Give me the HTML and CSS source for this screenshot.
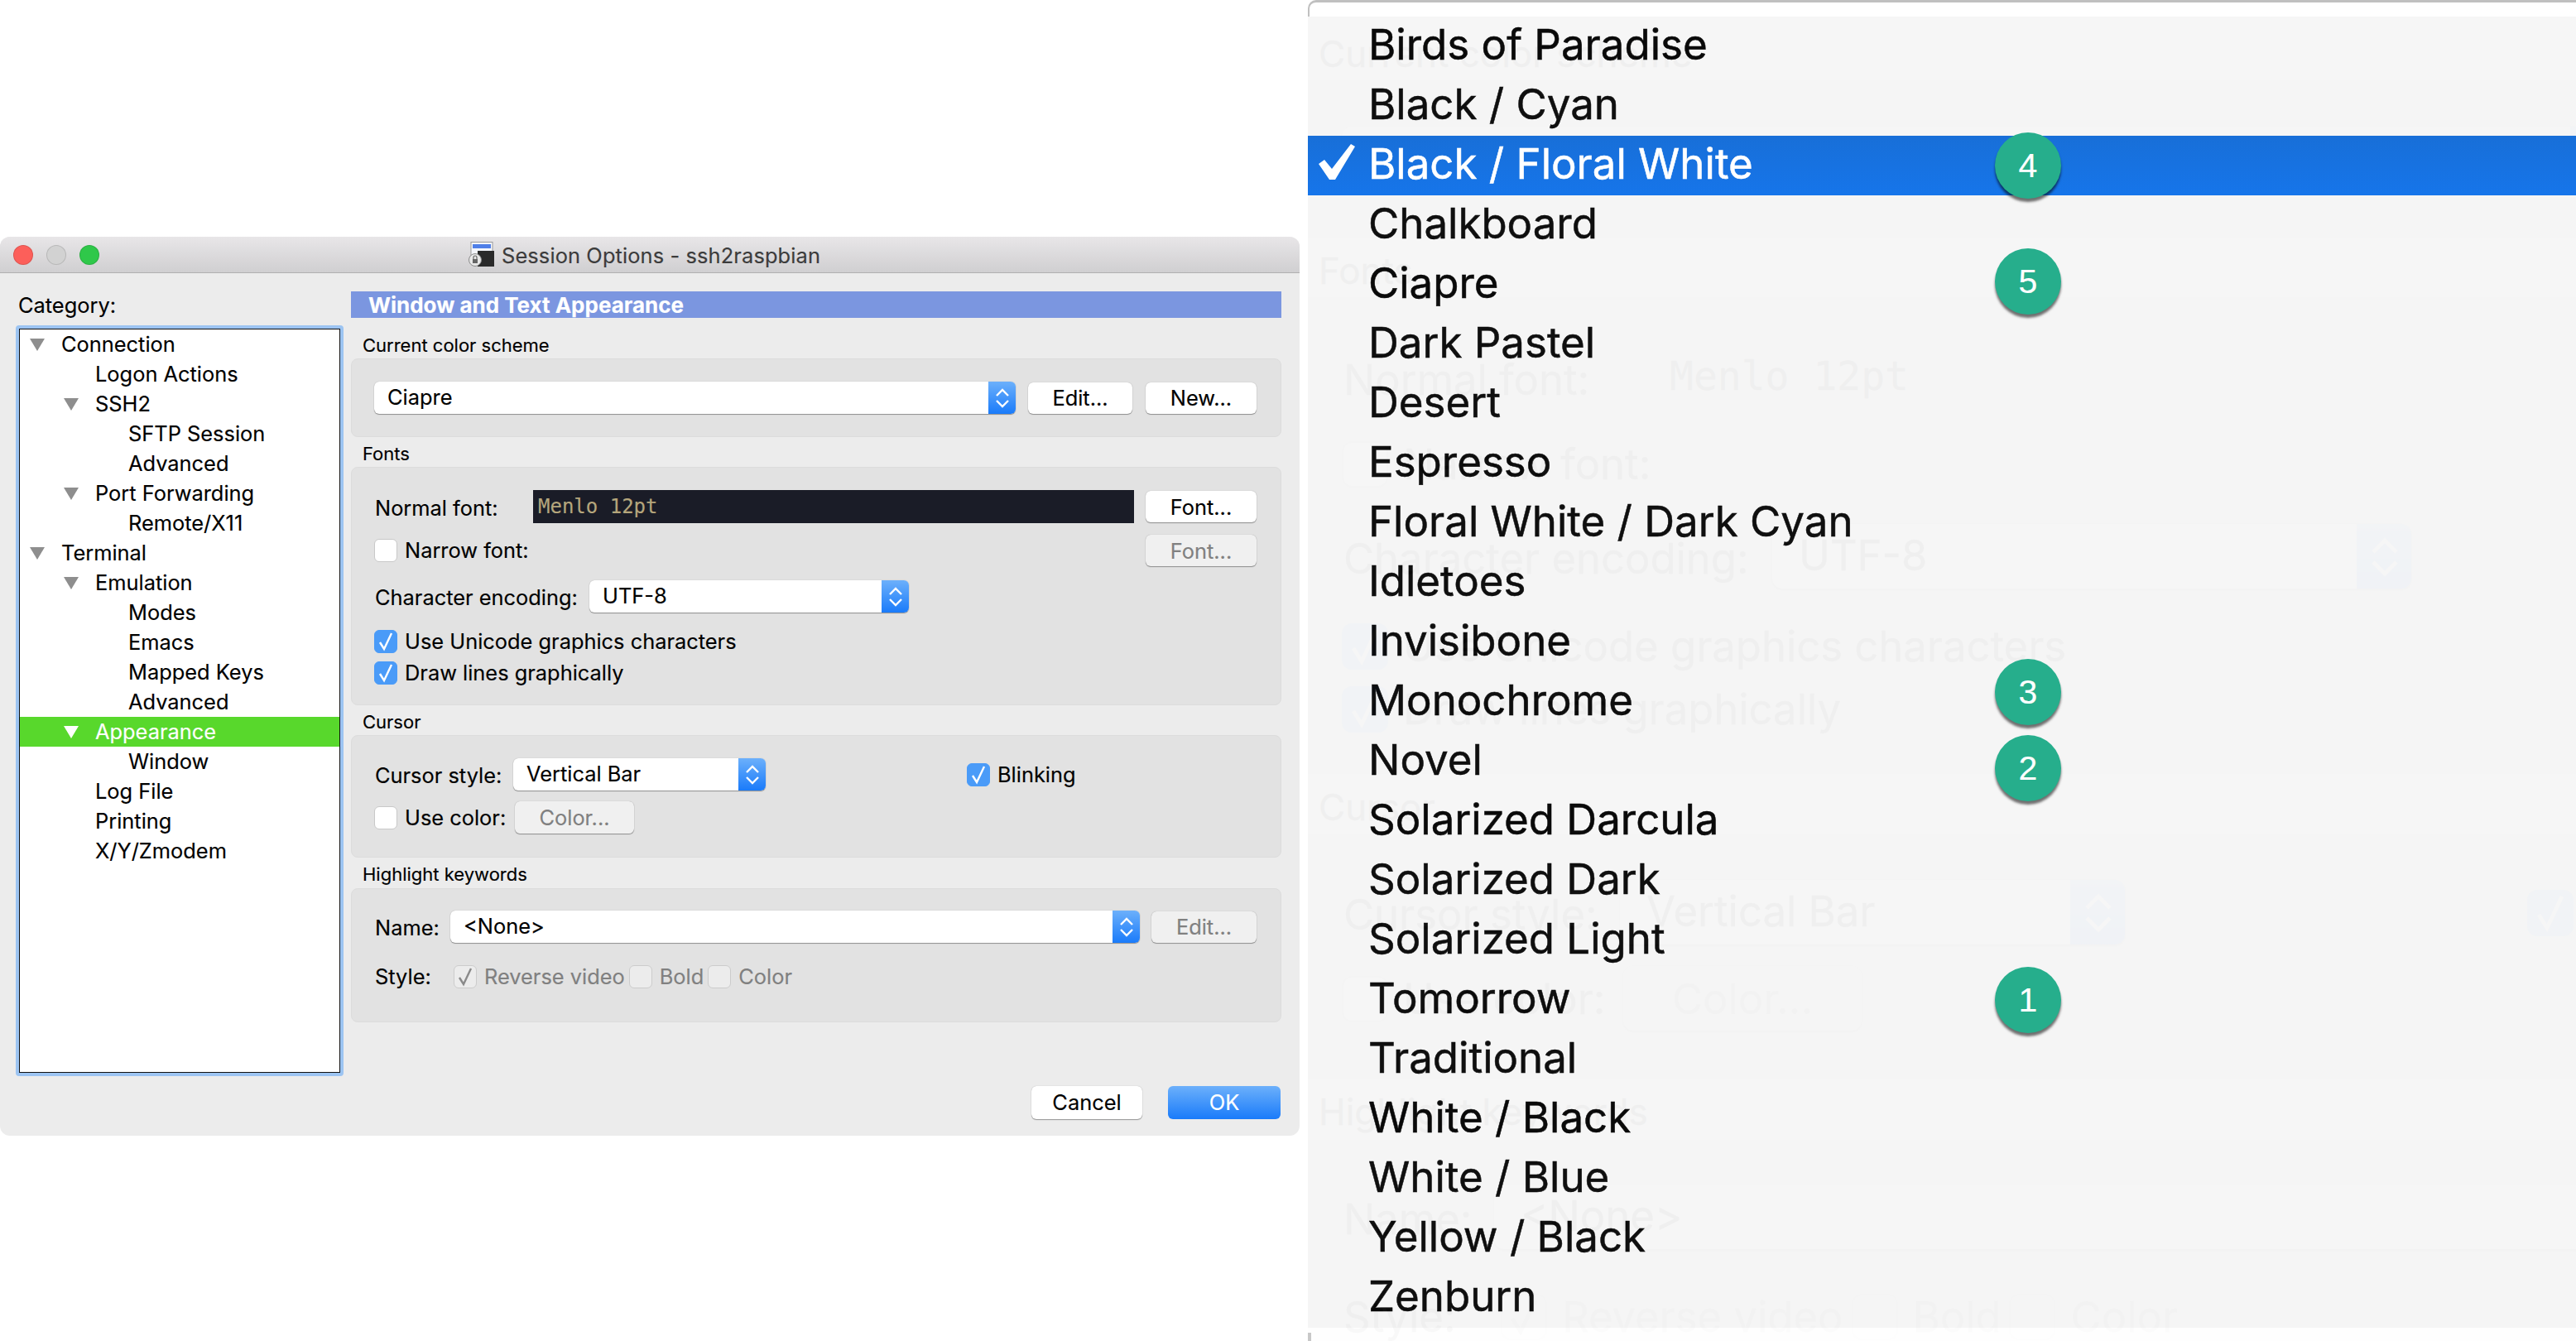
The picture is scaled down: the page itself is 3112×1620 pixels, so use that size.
FILE: index.html
```html
<!DOCTYPE html>
<html lang="en">
<head>
  <meta charset="UTF-8">
  <title>Session Options - ssh2raspbian</title>
  <link rel="stylesheet" href="styles.css">
</head>
<body>
  <div class="dialog-side">
    <div class="window">
      <div class="titlebar">
        <span class="light light-red"></span>
        <span class="light light-off"></span>
        <span class="light light-green"></span>
        <svg class="title-icon" width="31" height="31" viewBox="0 0 31 31">
          <rect x="3" y="0.5" width="26" height="21" fill="#f4f6fb" stroke="#9a9a9a"/>
          <rect x="5" y="3" width="22" height="5" fill="#4f7fe8"/>
          <rect x="11" y="11" width="20" height="19" fill="#2a2a2a"/>
          <circle cx="8" cy="22" r="7.5" fill="#e8e8e8" stroke="#8a8a8a"/>
          <rect x="5" y="21" width="6" height="5" fill="#666"/>
          <path d="M6 21v-2a2 2 0 0 1 4 0v2" fill="none" stroke="#666" stroke-width="1.2"/>
        </svg>
        <span class="title-text">Session Options - ssh2raspbian</span>
      </div>
      <div class="window-body">
        <div class="category">
          <div class="category-label">Category:</div>
          <div class="tree">
            <div class="node l0"><i class="twisty"></i>Connection</div>
            <div class="node l1">Logon Actions</div>
            <div class="node l1"><i class="twisty"></i>SSH2</div>
            <div class="node l2">SFTP Session</div>
            <div class="node l2">Advanced</div>
            <div class="node l1"><i class="twisty"></i>Port Forwarding</div>
            <div class="node l2">Remote/X11</div>
            <div class="node l0"><i class="twisty"></i>Terminal</div>
            <div class="node l1"><i class="twisty"></i>Emulation</div>
            <div class="node l2">Modes</div>
            <div class="node l2">Emacs</div>
            <div class="node l2">Mapped Keys</div>
            <div class="node l2">Advanced</div>
            <div class="node l1 selected"><i class="twisty"></i>Appearance</div>
            <div class="node l2">Window</div>
            <div class="node l1">Log File</div>
            <div class="node l1">Printing</div>
            <div class="node l1">X/Y/Zmodem</div>
          </div>
        </div>

        <div class="pane">
          <div class="pane-header">Window and Text Appearance</div>

          <div class="group-label first">Current color scheme</div>
          <div class="panel panel-scheme">
            <div class="row">
              <div class="combo combo-scheme"><span class="combo-text">Ciapre</span><span class="combo-arrows"><svg width="20" height="26" viewBox="0 0 20 26"><path d="M3 10l7-7 7 7M3 16l7 7 7-7" fill="none" stroke="#fff" stroke-width="2.4"/></svg></span></div>
              <button class="btn btn-edit">Edit...</button>
              <button class="btn btn-wide">New...</button>
            </div>
          </div>

          <div class="group-label">Fonts</div>
          <div class="panel panel-fonts">
            <div class="row row-font">
              <span class="label label-font">Normal font:</span>
              <div class="font-field">Menlo 12pt</div>
              <button class="btn btn-wide btn-font">Font...</button>
            </div>
            <div class="row row-narrow">
              <span class="check"></span>
              <span class="check-text">Narrow font:</span>
              <button class="btn btn-wide btn-off btn-push">Font...</button>
            </div>
            <div class="row row-encoding">
              <span class="label label-encoding">Character encoding:</span>
              <div class="combo combo-encoding"><span class="combo-text">UTF-8</span><span class="combo-arrows"><svg width="20" height="26" viewBox="0 0 20 26"><path d="M3 10l7-7 7 7M3 16l7 7 7-7" fill="none" stroke="#fff" stroke-width="2.4"/></svg></span></div>
            </div>
            <div class="row row-unicode">
              <span class="check on"><svg width="20" height="24" viewBox="0 0 20 24"><path d="M3 13l5 8L17 2" fill="none" stroke="#fff" stroke-width="2.4"/></svg></span>
              <span class="check-text">Use Unicode graphics characters</span>
            </div>
            <div class="row row-lines">
              <span class="check on"><svg width="20" height="24" viewBox="0 0 20 24"><path d="M3 13l5 8L17 2" fill="none" stroke="#fff" stroke-width="2.4"/></svg></span>
              <span class="check-text">Draw lines graphically</span>
            </div>
          </div>

          <div class="group-label">Cursor</div>
          <div class="panel panel-cursor">
            <div class="row">
              <span class="label label-cursor">Cursor style:</span>
              <div class="combo combo-cursor"><span class="combo-text">Vertical Bar</span><span class="combo-arrows"><svg width="20" height="26" viewBox="0 0 20 26"><path d="M3 10l7-7 7 7M3 16l7 7 7-7" fill="none" stroke="#fff" stroke-width="2.4"/></svg></span></div>
              <span class="check on check-blink"><svg width="20" height="24" viewBox="0 0 20 24"><path d="M3 13l5 8L17 2" fill="none" stroke="#fff" stroke-width="2.4"/></svg></span>
              <span class="check-text">Blinking</span>
            </div>
            <div class="row row-color">
              <span class="check"></span>
              <span class="check-text label-usecolor">Use color:</span>
              <button class="btn btn-off btn-color">Color...</button>
            </div>
          </div>

          <div class="group-label">Highlight keywords</div>
          <div class="panel panel-highlight">
            <div class="row">
              <span class="label label-name">Name:</span>
              <div class="combo combo-name"><span class="combo-text">&lt;None&gt;</span><span class="combo-arrows"><svg width="20" height="26" viewBox="0 0 20 26"><path d="M3 10l7-7 7 7M3 16l7 7 7-7" fill="none" stroke="#fff" stroke-width="2.4"/></svg></span></div>
              <button class="btn btn-off btn-name">Edit...</button>
            </div>
            <div class="row row-style">
              <span class="label label-style">Style:</span>
              <span class="check off"><svg width="20" height="24" viewBox="0 0 20 24"><path d="M3 13l5 8L17 2" fill="none" stroke="#8a8a8a" stroke-width="2.4"/></svg></span>
              <span class="check-text muted">Reverse video</span>
              <span class="check off"></span>
              <span class="check-text muted">Bold</span>
              <span class="check off"></span>
              <span class="check-text muted">Color</span>
            </div>
          </div>

          <div class="footer">
            <button class="btn btn-cancel">Cancel</button>
            <button class="btn btn-ok">OK</button>
          </div>
        </div>
      </div>
    </div>
  </div>

  <div class="menu-side">
    <div class="menu-top"></div>
    <div class="menu">
      <div class="item">Birds of Paradise</div>
      <div class="item">Black / Cyan</div>
      <div class="item current">
        <svg class="item-check" width="45" height="46" viewBox="0 0 45 46"><path d="M0 24l7-5 9 11L39 0l5 3-24 40h-7z" fill="#fff"/></svg>Black / Floral White
      </div>
      <div class="item">Chalkboard</div>
      <div class="item">Ciapre</div>
      <div class="item">Dark Pastel</div>
      <div class="item">Desert</div>
      <div class="item">Espresso</div>
      <div class="item">Floral White / Dark Cyan</div>
      <div class="item">Idletoes</div>
      <div class="item">Invisibone</div>
      <div class="item">Monochrome</div>
      <div class="item">Novel</div>
      <div class="item">Solarized Darcula</div>
      <div class="item">Solarized Dark</div>
      <div class="item">Solarized Light</div>
      <div class="item">Tomorrow</div>
      <div class="item">Traditional</div>
      <div class="item">White / Black</div>
      <div class="item">White / Blue</div>
      <div class="item">Yellow / Black</div>
      <div class="item">Zenburn</div>
    </div>
    <div class="menu-foot"></div>

    <div class="ghost"></div>

    <span class="badge badge-4">4</span>
    <span class="badge badge-5">5</span>
    <span class="badge badge-3">3</span>
    <span class="badge badge-2">2</span>
    <span class="badge badge-1">1</span>
  </div>

  <script src="ghost.js"></script>
</body>
</html>
```

FILE: styles.css
```css
* {
  box-sizing: border-box;
}
body {
  margin: 0;
  width: 3112px;
  height: 1620px;
  display: flex;
  overflow: hidden;
  background: white;
  font-family: Inter, "Liberation Sans", sans-serif;
  font-size: 25.4px;
  -webkit-text-stroke: 0.15px;
  color: #000;
}
.dialog-side {
  width: 1580px;
  padding-top: 286px;
}
.window {
  width: 1570px;
  height: 1086px;
  background: #ececec;
  border-radius: 12px;
  overflow: hidden;
}

/* title bar */
.titlebar {
  height: 44px;
  display: flex;
  align-items: center;
  gap: 16px;
  padding-left: 16px;
  background: linear-gradient(#e8e6e8, #d0cfd1);
  border-bottom: 1px solid #b0b0b0;
}
.light {
  width: 24px;
  height: 24px;
  border-radius: 50%;
  border: 1px solid rgba(0,0,0,0.12);
}
.light-red { background: #fc5f5a; }
.light-off { background: #d2d2d2; }
.light-green { background: #2fc84a; }
.title-icon {
  margin-left: 430px;
}
.title-text {
  margin-left: -7px;
  padding-top: 2px;
  letter-spacing: 0.12px;
  color: #3c3c3c;
}

.window-body {
  display: flex;
  padding: 22px 0 0 19px;
}

/* category tree */
.category {
  width: 396px;
  margin-right: 9px;
}
.category-label {
  height: 41px;
  line-height: 34px;
  padding-left: 3px;
}
.tree {
  height: 907px;
  background: white;
  border: 4px solid #9cc4f2;
  border-radius: 4px;
  outline: 1px solid #111;
  outline-offset: -5px;
  padding: 1px;
}
.node {
  height: 36px;
  display: flex;
  align-items: center;
  padding-bottom: 2px;
}
.l0 { padding-left: 50px; }
.l1 { padding-left: 91px; }
.l2 { padding-left: 131px; }
.twisty {
  width: 0;
  height: 0;
  margin-top: 2px;
  margin-left: -38px;
  margin-right: 20px;
  border-left: 9px solid transparent;
  border-right: 9px solid transparent;
  border-top: 15px solid #8e8e8e;
}
.selected {
  background: #58d82c;
  color: white;
}
.selected .twisty {
  border-top-color: white;
}

/* right pane */
.pane {
  width: 1124px;
}
.pane-header {
  height: 32px;
  line-height: 33px;
  padding-left: 21px;
  background: #7b96e0;
  color: white;
  font-size: 26px;
  font-weight: 700;
}
.group-label {
  height: 32px;
  line-height: 33px;
  margin-top: 4px;
  padding-left: 14px;
  font-size: 22px;
}
.group-label.first {
  margin-top: 17px;
}
.panel {
  background: #e2e2e2;
  border: 1px solid #dcdcdc;
  border-radius: 8px;
  padding-left: 27px;
}
.panel-scheme {
  height: 95px;
  padding-top: 27px;
}
.panel-fonts {
  height: 288px;
  padding-top: 27px;
}
.panel-cursor {
  height: 148px;
  padding-top: 27px;
}
.panel-highlight {
  height: 162px;
  margin-top: 1px;
  padding-top: 26px;
}
.row {
  display: flex;
  align-items: center;
}
.row-narrow { margin-top: 14px; }
.row-encoding { margin-top: 17px; }
.row-unicode { margin-top: 21px; }
.row-lines { margin-top: 10px; }
.row-color { margin-top: 13px; }
.row-style { margin-top: 25px; }

.label {
  padding: 2px 0 0 1px;
}
.label-font { width: 192px; }
.label-encoding { width: 260px; }
.label-cursor { width: 168px; }
.label-name { width: 92px; }
.label-style { width: 96px; padding-top: 0; }

/* controls */
.combo {
  height: 39px;
  display: flex;
  justify-content: space-between;
  background: white;
  border-radius: 6px;
  box-shadow: 0 1px 1px rgba(0,0,0,0.35), 0 0 1px rgba(0,0,0,0.3);
}
.combo-text {
  padding-left: 16px;
  line-height: 38px;
}
.combo-arrows {
  width: 33px;
  display: flex;
  align-items: center;
  justify-content: center;
  background: linear-gradient(#6cb0fb, #1a7bfa);
  border-radius: 0 6px 6px 0;
}
.combo-scheme { width: 775px; }
.combo-encoding { width: 386px; }
.combo-cursor { width: 305px; }
.combo-name { width: 833px; }

.btn {
  height: 38px;
  padding: 0;
  border: none;
  background: white;
  border-radius: 6px;
  box-shadow: 0 1px 1px rgba(0,0,0,0.35), 0 0 1px rgba(0,0,0,0.3);
  font: inherit;
  color: #000;
}
.btn-edit {
  width: 126px;
  margin-left: 15px;
}
.btn-wide {
  width: 134px;
  margin-left: 16px;
}
.btn-font { margin-left: 14px; }
.btn-push { margin-left: auto; margin-right: 29px; }
.btn-off {
  background: #f0f0f0;
  color: #808080;
}
.btn-color {
  width: 144px;
  height: 39px;
}
.btn-name {
  width: 127px;
  margin-left: 14px;
}
.btn-cancel {
  width: 134px;
  height: 40px;
  padding-bottom: 2px;
}
.btn-ok {
  width: 136px;
  height: 40px;
  padding-bottom: 2px;
  background: linear-gradient(#6cb0fb, #1a7bfa);
  color: white;
  box-shadow: none;
}

.font-field {
  width: 726px;
  height: 40px;
  padding-left: 6px;
  background: #1a1c27;
  color: #b5a67c;
  font-family: "DejaVu Sans Mono", monospace;
  font-size: 24px;
  line-height: 40px;
}

.check {
  width: 28px;
  height: 28px;
  display: flex;
  align-items: center;
  justify-content: center;
  background: white;
  border: 1px solid #c8c8c8;
  border-radius: 6px;
}
.check.on {
  background: #4a9bf8;
  border-color: #4a9bf8;
}
.check.off {
  background: #ececec;
  border-color: #cccccc;
}
.check-text {
  margin-left: 9px;
  line-height: 28px;
}
.muted {
  color: #808080;
  margin-right: 5px;
  line-height: 26px;
}
.check-blink {
  margin-left: 243px;
}
.label-usecolor {
  width: 133px;
  margin-right: 0;
}
.footer {
  display: flex;
  justify-content: flex-end;
  gap: 31px;
  margin-top: 77px;
  padding-right: 1px;
}

/* theme menu */
.menu-side {
  position: relative;
  width: 1532px;
  height: 1620px;
  overflow: hidden;
  background: white;
}
.menu-top {
  height: 20px;
  border-top: 3px solid #c0c0c0;
  border-left: 2px solid #c0c0c0;
  border-top-left-radius: 10px;
}
.menu {
  background: #f6f6f6;
}
.item {
  height: 72px;
  display: flex;
  align-items: center;
  padding-left: 73px;
  padding-bottom: 6px;
  font-size: 51px;
  -webkit-text-stroke: 0.5px;
  color: #0a0a0a;
}
.item.current {
  position: relative;
  z-index: 2;
  background: linear-gradient(#186fd8, #1675ea);
  color: white;
}
.item-check {
  margin-left: -60px;
  margin-right: 15px;
  margin-top: -1px;
}
.menu-foot {
  height: 16px;
  background: linear-gradient(#c8c8c8, #c8c8c8) left bottom / 4px 10px no-repeat;
}

/* faded copy of the dialog behind the menu */
.ghost {
  position: absolute;
  left: -15px;
  top: -65px;
  z-index: 1;
  transform: scale(2);
  transform-origin: 0 0;
  opacity: 0.025;
  pointer-events: none;
}
.ghost .font-field,
.ghost .pane-header {
  background: transparent;
  color: #000;
}

.badge {
  position: absolute;
  left: 830px;
  z-index: 3;
  width: 80px;
  height: 80px;
  display: flex;
  align-items: center;
  justify-content: center;
  border-radius: 50%;
  background: #26ae8c;
  box-shadow: 0 4px 3px rgba(0,0,0,0.55);
  color: white;
  font-family: "Liberation Sans", sans-serif;
  font-size: 41px;
}
.badge-4 { top: 160px; }
.badge-5 { top: 300px; }
.badge-3 { top: 796px; }
.badge-2 { top: 888px; }
.badge-1 { top: 1168px; }
```

FILE: ghost.js
```js
// the menu sits over a faded, doubled copy of the dialog's right pane
const pane = document.querySelector('.pane');
document.querySelector('.ghost').appendChild(pane.cloneNode(true));
```
